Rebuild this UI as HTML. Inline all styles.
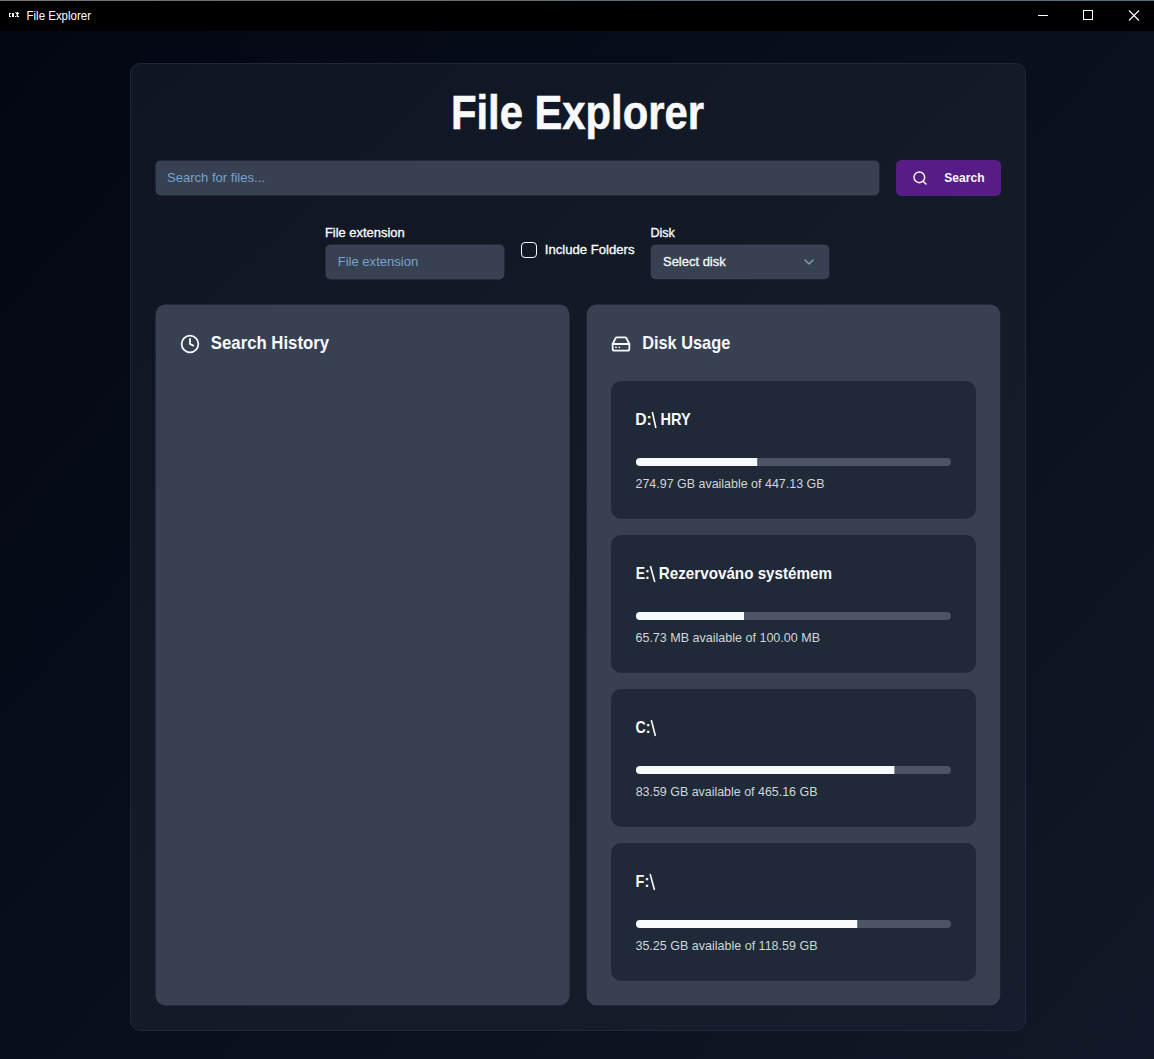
<!DOCTYPE html>
<html><head><meta charset="utf-8"><title>File Explorer</title>
<style>
*{box-sizing:border-box;margin:0;padding:0}
html,body{width:1154px;height:1059px;overflow:hidden;background:#070b18}
body{font-family:"Liberation Sans",sans-serif;position:relative}
svg{position:absolute;left:0;top:0;display:block}
text{font-family:"Liberation Sans",sans-serif;white-space:pre}
</style></head><body>
<svg width="1154" height="1059" viewBox="0 0 1154 1059">
<defs>
<linearGradient id="bg" gradientUnits="userSpaceOnUse" x1="0" y1="31" x2="1154" y2="1059">
<stop offset="0" stop-color="#030714"/><stop offset="0.5" stop-color="#0a0f1d"/><stop offset="1" stop-color="#111827"/></linearGradient>
<linearGradient id="cardg" gradientUnits="userSpaceOnUse" x1="130" y1="63" x2="1026" y2="1031">
<stop offset="0" stop-color="#0f1523"/><stop offset="0.5" stop-color="#131a28"/><stop offset="1" stop-color="#161e2d"/></linearGradient>
</defs>
<rect x="0" y="0" width="1154.00" height="1059.00" rx="0" fill="url(#bg)"/>
<rect x="0" y="0" width="1154.00" height="31.00" rx="0" fill="#000"/>
<linearGradient id="tl" x1="0" x2="1"><stop offset="0" stop-color="#737373"/><stop offset="0.55" stop-color="#5f6a72"/><stop offset="1" stop-color="#56707f"/></linearGradient><rect x="0" y="0" width="1154" height="1" fill="url(#tl)"/>
<g fill="#fff"><rect x="9" y="13" width="1" height="4"/><rect x="10" y="13" width="1" height="1"/><rect x="10" y="16" width="1" height="1"/><rect x="12" y="13" width="2" height="4"/><rect x="15" y="12" width="1" height="1" opacity="0.7"/><rect x="15" y="16" width="1" height="1"/><rect x="16.6" y="12" width="1.5" height="5"/><rect x="16" y="13" width="3" height="1"/><rect x="18" y="16" width="1" height="1"/></g>
<text transform="translate(26.54,19.6) scale(0.955,1)" font-size="12.03" font-weight="400" fill="#fff">File Explorer</text>
<g stroke="#fff" stroke-width="1" fill="none"><path d="M1038 15.5H1048"/><rect x="1083.5" y="10.5" width="9" height="9"/><path d="M1129 10.5L1139 20.5M1139 10.5L1129 20.5" stroke-width="1.1"/></g>
<rect x="130.5" y="63.5" width="895" height="967" rx="10" fill="url(#cardg)" stroke="#1e293b" stroke-width="1"/>
<text transform="translate(450.88,129.0) scale(0.853,1)" font-size="49.00" font-weight="700" fill="#f8fafc" stroke="#f8fafc" stroke-width="0.6" stroke-linejoin="miter">File Explorer</text>
<rect x="155.5" y="160.5" width="723.90" height="34.90" rx="5" fill="#374151"/>
<text transform="translate(167.01,182.0) scale(0.959,1)" font-size="13.62" font-weight="400" fill="#77a2cd">Search for files...</text>
<rect x="896" y="160" width="105.00" height="36.00" rx="5.5" fill="#581c87"/>
<g transform="translate(912,170) scale(0.6667)" fill="none" stroke="#f8fafc" stroke-width="2.15" stroke-linecap="round" stroke-linejoin="round"><circle cx="11" cy="11" r="8"/><path d="m21 21-4.3-4.3"/></g>
<text transform="translate(944.33,182.0) scale(0.899,1)" font-size="13.43" font-weight="700" fill="#f8fafc">Search</text>
<text transform="translate(324.95,237.0) scale(0.973,1)" font-size="13.30" font-weight="400" fill="#f8fafc" stroke="#f8fafc" stroke-width="0.35">File extension</text>
<rect x="325.5" y="244.5" width="178.90" height="34.90" rx="5" fill="#374151"/>
<text transform="translate(337.64,266.0) scale(0.961,1)" font-size="13.62" font-weight="400" fill="#77a2cd">File extension</text>
<rect x="521.5" y="242.5" width="15" height="15" rx="3.5" fill="none" stroke="#f8fafc" stroke-width="1"/>
<text transform="translate(544.82,254.4) scale(0.973,1)" font-size="13.50" font-weight="400" fill="#f8fafc" stroke="#f8fafc" stroke-width="0.35">Include Folders</text>
<text transform="translate(650.49,237.0) scale(0.945,1)" font-size="13.30" font-weight="400" fill="#f8fafc" stroke="#f8fafc" stroke-width="0.35">Disk</text>
<rect x="650.6" y="244.5" width="178.80" height="34.80" rx="5" fill="#374151"/>
<text transform="translate(662.97,266.0) scale(0.969,1)" font-size="13.40" font-weight="400" fill="#f8fafc" stroke="#f8fafc" stroke-width="0.3">Select disk</text>
<g transform="translate(801,254) scale(0.6667)" fill="none" stroke="#8fb4d4" stroke-width="2" stroke-linecap="round" stroke-linejoin="round" opacity="0.85"><path d="m6 9 6 6 6-6"/></g>
<rect x="155.5" y="304.4" width="414.00" height="701.10" rx="10" fill="#374151"/>
<rect x="586.6" y="304.4" width="413.60" height="701.10" rx="10" fill="#374151"/>
<g transform="translate(180,334) scale(0.8333)" fill="none" stroke="#f8fafc" stroke-width="2.15" stroke-linecap="round" stroke-linejoin="round"><circle cx="12" cy="12" r="10"/><polyline points="12 6 12 12 16 14"/></g>
<g transform="translate(611,334) scale(0.8333)" fill="none" stroke="#f8fafc" stroke-width="2.15" stroke-linecap="round" stroke-linejoin="round"><line x1="22" x2="2" y1="12" y2="12"/><path d="M5.45 5.11 2 12v6a2 2 0 0 0 2 2h16a2 2 0 0 0 2-2v-6l-3.45-6.89A2 2 0 0 0 16.76 4H7.24a2 2 0 0 0-1.79 1.11z"/><line x1="6" x2="6.01" y1="16" y2="16"/><line x1="10" x2="10.01" y1="16" y2="16"/></g>
<text transform="translate(210.87,349.0) scale(0.877,1)" font-size="19.10" font-weight="700" fill="#f8fafc">Search History</text>
<text transform="translate(642.18,349.0) scale(0.856,1)" font-size="19.10" font-weight="700" fill="#f8fafc">Disk Usage</text>
<rect x="611" y="381" width="365.00" height="137.80" rx="10" fill="#1f2937"/>
<text transform="translate(635.22,424.7) scale(0.928,1)" font-size="16.96" font-weight="700" fill="#f8fafc">D:</text>
<text transform="translate(660.41,424.7) scale(0.861,1)" font-size="16.96" font-weight="700" fill="#f8fafc">HRY</text>
<path d="M652.3 412L655.9 428" stroke="#f8fafc" stroke-width="1.6" fill="none"/>
<clipPath id="c0"><rect x="636" y="458" width="315" height="8" rx="4"/></clipPath>
<g clip-path="url(#c0)"><rect x="636" y="458" width="315" height="8" fill="#4b5563"/><rect x="636" y="458" width="121.2" height="8" fill="#f8fafc"/></g>
<text transform="translate(635.48,488.0) scale(0.915,1)" font-size="13.62" font-weight="400" fill="#d1d5db">274.97 GB available of 447.13 GB</text>
<rect x="611" y="535" width="365.00" height="137.80" rx="10" fill="#1f2937"/>
<text transform="translate(635.72,578.9) scale(0.837,1)" font-size="16.81" font-weight="700" fill="#f8fafc">E:</text>
<text transform="translate(658.77,578.9) scale(0.906,1)" font-size="16.81" font-weight="700" fill="#f8fafc">Rezervováno systémem</text>
<path d="M650.4 566L654.8 582" stroke="#f8fafc" stroke-width="1.6" fill="none"/>
<clipPath id="c1"><rect x="636" y="612" width="315" height="8" rx="4"/></clipPath>
<g clip-path="url(#c1)"><rect x="636" y="612" width="315" height="8" fill="#4b5563"/><rect x="636" y="612" width="108.0" height="8" fill="#f8fafc"/></g>
<text transform="translate(635.45,642.0) scale(0.921,1)" font-size="13.62" font-weight="400" fill="#d1d5db">65.73 MB available of 100.00 MB</text>
<rect x="611" y="689" width="365.00" height="137.80" rx="10" fill="#1f2937"/>
<text transform="translate(635.49,732.9) scale(0.844,1)" font-size="16.81" font-weight="700" fill="#f8fafc">C:</text>
<path d="M651.3 720L655.4 736" stroke="#f8fafc" stroke-width="1.6" fill="none"/>
<clipPath id="c2"><rect x="636" y="766" width="315" height="8" rx="4"/></clipPath>
<g clip-path="url(#c2)"><rect x="636" y="766" width="315" height="8" fill="#4b5563"/><rect x="636" y="766" width="258.4" height="8" fill="#f8fafc"/></g>
<text transform="translate(635.65,796.0) scale(0.914,1)" font-size="13.62" font-weight="400" fill="#d1d5db">83.59 GB available of 465.16 GB</text>
<rect x="611" y="843" width="365.00" height="137.80" rx="10" fill="#1f2937"/>
<text transform="translate(635.59,886.9) scale(0.865,1)" font-size="16.81" font-weight="700" fill="#f8fafc">F:</text>
<path d="M650.1 874L654.5 890" stroke="#f8fafc" stroke-width="1.6" fill="none"/>
<clipPath id="c3"><rect x="636" y="920" width="315" height="8" rx="4"/></clipPath>
<g clip-path="url(#c3)"><rect x="636" y="920" width="315" height="8" fill="#4b5563"/><rect x="636" y="920" width="221.2" height="8" fill="#f8fafc"/></g>
<text transform="translate(635.45,950.0) scale(0.919,1)" font-size="13.62" font-weight="400" fill="#d1d5db">35.25 GB available of 118.59 GB</text>
</svg></body></html>
